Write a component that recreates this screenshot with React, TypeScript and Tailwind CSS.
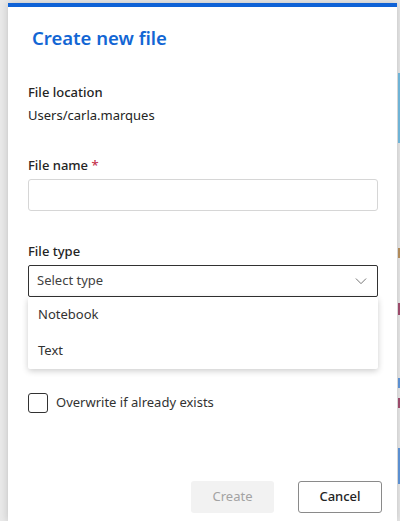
import React from 'react';

const ChevronDown = () => (
  <svg width="14" height="14" viewBox="0 0 16 16" fill="none">
    <path d="M2.5 5.5 8 11l5.5-5.5" stroke="#616161" strokeWidth="1" strokeLinecap="round" strokeLinejoin="round" />
  </svg>
);

const App = () => {
  return (
    <div
      className="relative flex h-[521px] w-[400px] overflow-hidden bg-[#e9e9e9] pt-[3px]"
      style={{ fontFamily: '"Noto Sans", "Open Sans", sans-serif' }}
    >
      <div className="relative ml-[8px] flex w-[389px] flex-col bg-white shadow-[0_0_8px_rgba(0,0,0,0.18)]">
        <div className="h-[4px] bg-[#0f62d6]" />

        <div className="flex flex-1 flex-col pl-[20px] pr-[19px]">
          <h1 className="mt-[17px] pl-[4px] text-[18.5px] font-semibold leading-[28px] text-[#1266d4]">
            Create new file
          </h1>

          <div className="mt-[30px] text-[13px] font-medium leading-[20px] text-[#242424]">File location</div>
          <div className="mt-[3px] text-[13px] leading-[20px] text-[#242424]">Users/carla.marques</div>

          <div className="mt-[30px] text-[13px] font-medium leading-[20px] text-[#242424]">
            File name <span className="text-[#c4314b]">*</span>
          </div>
          <div className="mt-[4px] h-[32px] rounded-[3px] border border-[#d6d6d6] bg-white" />

          <div className="mt-[30px] text-[13px] font-medium leading-[20px] text-[#242424]">File type</div>
          <div className="relative mt-[4px]">
            <div className="flex h-[32px] items-center justify-between rounded-[2px] border border-[#323232] pl-[8px] pr-[9px]">
              <span className="text-[13px] text-[#424242]">Select type</span>
              <ChevronDown />
            </div>
            <div className="absolute left-0 right-0 top-[32px] z-10 rounded-[2px] bg-white shadow-[0_2px_6px_rgba(0,0,0,0.2)]">
              <div className="flex h-[36px] items-center pl-[10px] text-[13px] text-[#323232]">Notebook</div>
              <div className="flex h-[36px] items-center pl-[10px] text-[13px] text-[#323232]">Text</div>
            </div>
          </div>

          <div className="mt-[96px] flex items-center gap-[8px]">
            <div className="h-[20px] w-[20px] rounded-[3px] border border-[#323232]" />
            <span className="text-[13px] text-[#323232]">Overwrite if already exists</span>
          </div>

          <div className="mt-auto mb-[8px] flex justify-end gap-[24px]">
            <button className="h-[32px] w-[83px] rounded-[3px] bg-[#f2f2f2] text-[13px] text-[#a3a3a3]">
              Create
            </button>
            <button className="-mr-[4px] h-[32px] w-[84px] rounded-[3px] border border-[#8a8a8a] bg-white text-[13px] font-medium text-[#242424]">
              Cancel
            </button>
          </div>
        </div>
      </div>

      <div className="relative ml-[1px] w-[2px] flex-none">
        <div className="absolute left-0 top-[70px] h-[70px] w-[2px] bg-[#6fb3d6]" />
        <div className="absolute left-0 top-[245px] h-[10px] w-[2px] bg-[#b08a5a]" />
        <div className="absolute left-0 top-[300px] h-[12px] w-[2px] bg-[#9a4a6a]" />
        <div className="absolute left-0 top-[375px] h-[10px] w-[2px] bg-[#5b8fd0]" />
        <div className="absolute left-0 top-[395px] h-[10px] w-[2px] bg-[#9a4a6a]" />
        <div className="absolute left-0 top-[445px] h-[36px] w-[2px] bg-[#5b8fd0]" />
      </div>
    </div>
  );
};

export default App;
